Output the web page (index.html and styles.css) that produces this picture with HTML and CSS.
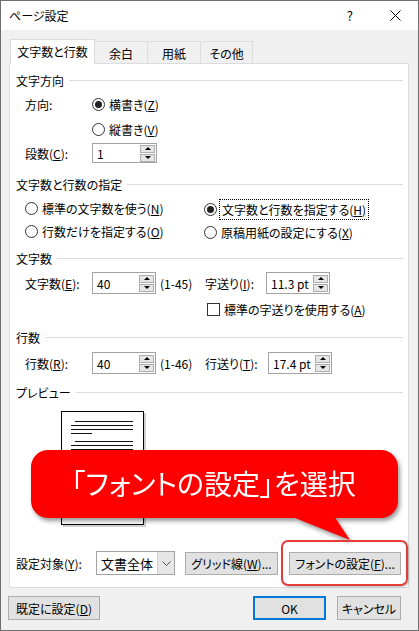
FILE: index.html
```html
<!DOCTYPE html>
<html lang="ja">
<head>
  <meta charset="UTF-8">
  <meta name="viewport" content="width=device-width, initial-scale=1.0">
  <title>ページ設定</title>
  <link rel="stylesheet" href="styles.css">
</head>
<body>
  <div class="window">
    <header class="titlebar">
      <span class="title">ページ設定</span>
      <span class="help">?</span>
      <svg class="close" width="11" height="11" viewBox="0 0 11 11"><path d="M0.5 0.5 L10.5 10.5 M10.5 0.5 L0.5 10.5" stroke="#000" stroke-width="1"/></svg>
    </header>

    <div class="client">
      <div class="tabs">
        <div class="tab active">文字数と行数</div>
        <div class="tab t2">余白</div>
        <div class="tab t2">用紙</div>
        <div class="tab t3">その他</div>
      </div>

      <div class="panel">
        <div class="row group"><span>文字方向</span><i class="rule"></i></div>
        <div class="row indent m2">
          <span class="lbl">方向:</span>
          <span class="radio checked"><i></i>横書き(<u>Z</u>)</span>
        </div>
        <div class="row m3 pl-radio">
          <span class="radio"><i></i>縦書き(<u>V</u>)</span>
        </div>
        <div class="row indent m2">
          <span class="lbl">段数(<u>C</u>):</span>
          <span class="spin w65 h20"><span>1</span><span class="arrows"><i class="up"></i><i class="dn"></i></span></span>
        </div>

        <div class="row group m9"><span>文字数と行数の指定</span><i class="rule"></i></div>
        <div class="row indent m3">
          <span class="col"><span class="radio"><i></i>標準の文字数を使う(<u>N</u>)</span></span>
          <span class="radio checked"><i></i><span class="focus">文字数と行数を指定する(<u>H</u>)</span></span>
        </div>
        <div class="row indent m1">
          <span class="col"><span class="radio"><i></i>行数だけを指定する(<u>O</u>)</span></span>
          <span class="radio"><i></i>原稿用紙の設定にする(<u>X</u>)</span>
        </div>

        <div class="row group m4"><span>文字数</span><i class="rule"></i></div>
        <div class="row indent m3">
          <span class="lbl">文字数(<u>E</u>):</span>
          <span class="spin w64"><span>40</span><span class="arrows"><i class="up"></i><i class="dn"></i></span></span>
          <span class="range">(1-45)</span>
          <span class="lbl2">字送り(<u>I</u>):</span>
          <span class="spin w64"><span>11.3 pt</span><span class="arrows"><i class="up"></i><i class="dn"></i></span></span>
        </div>
        <div class="row m4 pl-check">
          <span class="check"><i></i>標準の字送りを使用する(<u>A</u>)</span>
        </div>

        <div class="row group m6"><span>行数</span><i class="rule"></i></div>
        <div class="row indent m4">
          <span class="lbl">行数(<u>R</u>):</span>
          <span class="spin w64"><span>40</span><span class="arrows"><i class="up"></i><i class="dn"></i></span></span>
          <span class="range">(1-46)</span>
          <span class="lbl2 wide">行送り(<u>T</u>):</span>
          <span class="spin w64"><span>17.4 pt</span><span class="arrows"><i class="up"></i><i class="dn"></i></span></span>
        </div>

        <div class="row group m7"><span>プレビュー</span><i class="rule"></i></div>
        <div class="preview">
          <svg width="81" height="112" viewBox="0 0 81 112">
            <g stroke="#111" stroke-width="1">
              <path d="M13 9.5 H71 M9 13.5 H71 M9 17.5 H71 M9 21.5 H30"/>
              <path d="M13 29.5 H71 M9 33.5 H71 M9 37.5 H71 M9 41.5 H71 M9 45.5 H52"/>
              <path d="M13 53.5 H71 M9 57.5 H71 M9 61.5 H71 M9 65.5 H71 M9 69.5 H71 M9 73.5 H40"/>
              <path d="M13 81.5 H71 M9 85.5 H71 M9 89.5 H71 M9 93.5 H60"/>
            </g>
          </svg>
        </div>

        <div class="row bottom">
          <span class="lbl3">設定対象(<u>Y</u>):</span>
          <span class="select"><span>文書全体</span><span class="drop"><svg width="9" height="5" viewBox="0 0 9 5"><path d="M0.5 0.5 L4.5 4.5 L8.5 0.5" fill="none" stroke="#555"/></svg></span></span>
          <span class="btn grid">グリッド線(<u>W</u>)...</span>
          <span class="btn font">フォントの設定(<u>F</u>)...</span>
        </div>
      </div>

      <div class="footer">
        <span class="btn reset">既定に設定(<u>D</u>)</span>
        <span class="btn ok">OK</span>
        <span class="btn cancel">キャンセル</span>
      </div>
    </div>

    <!-- annotation over the dialog -->
    <div class="callout">
      <svg class="tail" width="64" height="26" viewBox="0 0 64 26"><polygon points="2,0 46,0 62,24" fill="#ff0000"/></svg>
      <div class="bubble">「フォントの設定」を選択</div>
    </div>
    <div class="highlight"></div>
  </div>
</body>
</html>
```

FILE: styles.css
```css
* {
  box-sizing: border-box;
}
body {
  margin: 0;
  font-family: "Noto Sans CJK JP", "Noto Sans", sans-serif;
  font-size: 12px;
  color: #000;
  font-feature-settings: "palt";
}
u {
  text-decoration: underline;
  text-decoration-thickness: 1px;
  text-underline-offset: 1px;
}

.window {
  position: relative;
  width: 419px;
  height: 631px;
  border: 1px solid #6e6e6e;
  background: #f0f0f0;
  overflow: hidden;
}

.titlebar {
  display: flex;
  align-items: center;
  height: 29px;
  padding-left: 8px;
  background: #fff;

  .title {
    flex: 1;
  }
  .help {
    margin-right: 37px;
    font-size: 13px;
  }
  .close {
    margin-right: 17px;
  }
}

.client {
  padding: 9px 8px 0 8px;
}

.tabs {
  display: flex;
  align-items: flex-end;
  height: 24px;

  .tab {
    display: flex;
    align-items: center;
    justify-content: center;
    height: 22px;
    border: 1px solid #dcdcdc;
    border-bottom: none;
    border-left: none;
    background: #f0f0f0;
    padding-top: 1px;
  }
  .active {
    position: relative;
    z-index: 1;
    width: 85px;
    height: 25px;
    margin-left: 1px;
    margin-bottom: -1px;
    border-left: 1px solid #dcdcdc;
    background: #fff;
    padding-top: 0;
    padding-bottom: 1px;
  }
  .t2 {
    width: 53px;
  }
  .t3 {
    width: 52px;
  }
}

.panel {
  height: 525px;
  width: 400px;
  border: 1px solid #dcdcdc;
  background: #fff;
  padding: 5px 5px 0 6px;
}

.row {
  display: flex;
  align-items: center;
  height: 22px;
}
.m1 { margin-top: 1px; }
.m2 { margin-top: 2px; }
.m3 { margin-top: 3px; }
.m4 { margin-top: 4px; }
.m6 { margin-top: 6px; }
.m7 { margin-top: 7px; }
.m9 { margin-top: 9px; }

.group {
  .rule {
    flex: 1;
    height: 1px;
    margin-left: 5px;
    background: #dcdcdc;
  }
}

.indent {
  padding-left: 9px;
}
.pl-radio {
  padding-left: 76px;
}
.pl-check {
  padding-left: 191px;
}
.lbl {
  width: 67px;
}
.lbl2 {
  width: 61px;
}
.lbl2.wide {
  width: 63px;
}
.range {
  width: 49px;
  padding-left: 4px;
}
.col {
  width: 179px;
}

.radio, .check {
  display: inline-flex;
  align-items: center;

  i {
    display: flex;
    align-items: center;
    justify-content: center;
    width: 13px;
    height: 13px;
    margin-right: 4px;
    border: 1px solid #333;
    border-radius: 50%;
    background: #fff;
  }
}
.radio.checked i::after {
  content: "";
  width: 7px;
  height: 7px;
  border-radius: 50%;
  background: #222;
}
.check i {
  border-radius: 0;
}
.focus {
  outline: 1px dotted #000;
  outline-offset: 1px;
  padding: 0 1px;
}

.spin {
  display: flex;
  align-items: center;
  justify-content: space-between;
  height: 22px;
  padding: 0 1px 0 4px;
  border: 1px solid #a3a3a3;
  background: #fff;

  .arrows {
    display: flex;
    flex-direction: column;
    gap: 1px;
  }
  .arrows i {
    display: flex;
    align-items: center;
    justify-content: center;
    width: 15px;
    height: 8px;
    border: 1px solid #adadad;
    background: #e6e6e6;
  }
  .up::after {
    content: "";
    border-left: 3px solid transparent;
    border-right: 3px solid transparent;
    border-bottom: 3px solid #000;
  }
  .dn::after {
    content: "";
    border-left: 3px solid transparent;
    border-right: 3px solid transparent;
    border-top: 3px solid #000;
  }
}
.w64 { width: 64px; }
.w65 { width: 65px; }
.h20 { height: 20px; }

.preview {
  width: 83px;
  height: 114px;
  margin: 8px 0 0 45px;
  border: 1px solid #000;
  background: #fff;
  box-shadow: 2px 2px 0 #cfcfcf;

  svg {
    display: block;
  }
}

.bottom {
  height: 24px;
  margin-top: 26px;

  .lbl3 {
    width: 80px;
  }
}

.select {
  display: flex;
  align-items: center;
  width: 79px;
  height: 24px;
  border: 1px solid #a3a3a3;
  background: #fff;
  padding-left: 4px;
  font-size: 13px;

  span:first-child {
    flex: 1;
  }
  .drop {
    display: flex;
    align-items: center;
    justify-content: center;
    width: 17px;
    height: 100%;
    background: #e6e6e6;
    border-left: 1px solid #d0d0d0;
  }
}

.btn {
  display: flex;
  align-items: center;
  justify-content: center;
  height: 23px;
  border: 1px solid #adadad;
  background: #e1e1e1;
}
.btn.grid {
  width: 93px;
  margin-left: 10px;
}
.btn.font {
  width: 112px;
  margin-left: 11px;
}

.footer {
  display: flex;
  margin-top: 8px;

  .btn {
    height: 24px;
  }
  .reset {
    width: 92px;
    margin-left: -1px;
  }
  .ok {
    width: 73px;
    margin-left: 153px;
    border: 2px solid #0078d7;
  }
  .cancel {
    width: 64px;
    margin-left: 11px;
  }
}

.callout {
  position: absolute;
  left: 30px;
  top: 449px;
  width: 367px;
  height: 68px;
  filter: drop-shadow(2px 3px 2px rgba(0, 0, 0, 0.4));

  .bubble {
    position: relative;
    display: flex;
    align-items: center;
    justify-content: center;
    height: 100%;
    border-radius: 17px;
    background: #ff0000;
    color: #fff;
    font-size: 28px;
    padding-bottom: 2px;
    padding-right: 2px;
  }
  .tail {
    position: absolute;
    left: 257px;
    top: 66px;
  }
}

.highlight {
  position: absolute;
  left: 280px;
  top: 539px;
  width: 127px;
  height: 46px;
  border: 2px solid #e63b3b;
  border-radius: 7px;
  box-shadow: 1px 1px 2px rgba(0, 0, 0, 0.25);
}
```
